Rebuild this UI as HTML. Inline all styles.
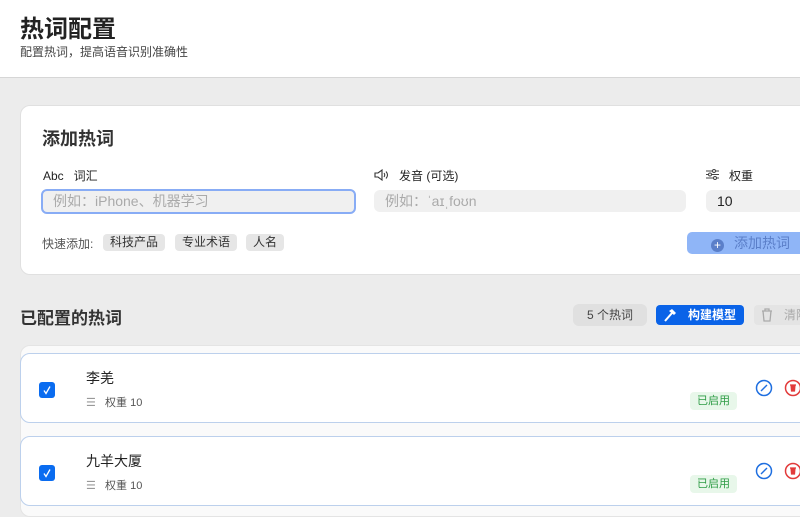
<html><head><style>
body{margin:0;width:800px;height:500px;overflow:hidden;background:#ececec;font-family:"Liberation Sans","Noto Sans CJK SC",sans-serif;color:#222;position:relative}
.a{position:absolute}
.hdr{left:0;top:0;width:800px;height:77px;background:#fff;border-bottom:1px solid #d6d6d6}
.card{left:20px;top:105px;width:800px;height:170px;background:#fff;border-radius:10px;border:1px solid #e0e0e0;box-sizing:border-box}
.inp{background:#f0f0f0;border-radius:6px;height:22px;font-size:14px;color:#aaa;line-height:22px;padding-left:11px;box-sizing:border-box}
.chip{background:#e6e6e6;border-radius:4px;font-size:12px;height:17px;line-height:17px;padding:0 7px;top:234px;color:#333}
.list{left:20px;top:345px;width:800px;height:170px;background:#fafafa;border-radius:10px;border:1px solid #e4e4e4}
.item{left:20px;width:800px;height:70px;background:#fff;border:1.5px solid #bcd0ec;border-radius:10px;box-sizing:border-box}
.cb{width:16px;height:16px;background:#0a6cf0;border-radius:3px}
.tag{background:#e8f7ea;color:#2e9c45;font-size:11px;border-radius:4px;padding:0 7px;height:18px;line-height:18px}
</style></head><body>
<div class="a hdr"></div>
<div class="a" style="left:20px;top:9px;font-size:24px;font-weight:bold;color:#222">热词配置</div>
<div class="a" style="left:20px;top:43px;font-size:12px;color:#444">配置热词，提高语音识别准确性</div>
<div class="a card"></div>
<div class="a" style="left:42px;top:125px;font-size:18px;font-weight:bold;color:#333">添加热词</div>
<div class="a" style="left:43px;top:167px;font-size:12px;color:#222">Abc&nbsp;&nbsp;&nbsp;词汇</div>
<div class="a inp" style="left:41px;top:189px;width:315px;height:25px;border:2.5px solid #88acf5;line-height:20px;padding-left:10px">例如：iPhone、机器学习</div>
<svg class="a" style="left:374px;top:169px" width="16" height="12" viewBox="0 0 16 12"><path d="M1 4h3l4-3v10l-4-3H1z" fill="none" stroke="#333" stroke-width="1.1"/><path d="M10 4q1.5 2 0 4M12 2.5q3 3.5 0 7" fill="none" stroke="#333" stroke-width="1"/></svg>
<div class="a" style="left:399px;top:167px;font-size:12px;color:#222">发音 (可选)</div>
<div class="a inp" style="left:374px;top:190px;width:312px">例如：ˈaɪˌfoʊn</div>
<svg class="a" style="left:706px;top:169px" width="13" height="11" viewBox="0 0 13 11"><path d="M0 2h13M0 5.5h13M0 9h13" stroke="#444" stroke-width="1"/><circle cx="8" cy="2" r="1.5" fill="#fff" stroke="#444"/><circle cx="4" cy="5.5" r="1.5" fill="#fff" stroke="#444"/><circle cx="9" cy="9" r="1.5" fill="#fff" stroke="#444"/></svg>
<div class="a" style="left:729px;top:167px;font-size:12px;color:#222">权重</div>
<div class="a inp" style="left:706px;top:190px;width:100px;color:#222">10</div>
<div class="a" style="left:42px;top:235px;font-size:12px;color:#555">快速添加:</div>
<div class="a chip" style="left:103px">科技产品</div>
<div class="a chip" style="left:175px">专业术语</div>
<div class="a chip" style="left:246px">人名</div>
<div class="a" style="left:687px;top:232px;width:120px;height:22px;background:#8fb5f7;border-radius:5px;color:#5b7fc9;font-size:14px;line-height:22px;padding-left:24px;box-sizing:border-box"><span style="display:inline-block;width:13px;height:13px;border-radius:50%;background:#5b7fc9;color:#fff;font-size:12px;line-height:13px;text-align:center;margin-right:10px;vertical-align:-1px">+</span>添加热词</div>
<div class="a" style="left:20px;top:304px;font-size:17px;font-weight:bold;color:#333">已配置的热词</div>
<div class="a" style="left:573px;top:304px;width:74px;height:22px;background:#e0e0e0;border-radius:6px;font-size:12px;line-height:22px;text-align:center;color:#444">5 个热词</div>
<div class="a" style="left:656px;top:305px;width:88px;height:20px;background:#0a63e8;border-radius:4px;font-size:12px;font-weight:bold;line-height:20px;color:#fff;padding-left:32px;box-sizing:border-box">构建模型</div>
<svg class="a" style="left:663px;top:308px" width="14" height="14" viewBox="0 0 14 14"><path d="M2 13L9 5" stroke="#fff" stroke-width="2"/><path d="M6 3l3-2 4 4-2 2z" fill="#fff"/></svg>
<div class="a" style="left:754px;top:305px;width:60px;height:20px;background:#e4e4e4;border-radius:4px;font-size:12px;line-height:20px;color:#aaa;padding-left:30px;box-sizing:border-box">清除</div>
<svg class="a" style="left:761px;top:308px" width="12" height="14" viewBox="0 0 12 14"><path d="M1 3h10M4 3V1h4v2M2 3l1 10h6l1-10" fill="none" stroke="#aaa" stroke-width="1.3"/></svg>
<div class="a list"></div>
<div class="a item" style="top:353px"></div>
<div class="a cb" style="left:39px;top:382px"></div>
<svg class="a" style="left:39px;top:382px" width="16" height="16"><path d="M5 8.5l2 3 4-7" fill="none" stroke="#fff" stroke-width="1.3"/></svg>
<div class="a" style="left:86px;top:368px;font-size:14px">李羌</div>
<div class="a" style="left:86px;top:394px;font-size:11px;color:#555"><span style="color:#999">☰</span>&nbsp;&nbsp;&nbsp;权重 10</div>
<div class="a tag" style="left:690px;top:392px">已启用</div>
<svg class="a" style="left:755px;top:379px" width="18" height="18"><circle cx="9" cy="9" r="7.5" fill="none" stroke="#1f6fe0" stroke-width="1.5"/><path d="M6 12l6-6" stroke="#1f6fe0" stroke-width="1.4"/></svg>
<svg class="a" style="left:784px;top:379px" width="18" height="18"><circle cx="9" cy="9" r="7.5" fill="none" stroke="#e23b3b" stroke-width="1.5"/><path d="M6 6h6M7 6l.5 6h3l.5-6" fill="#e23b3b" stroke="#e23b3b" stroke-width="1.2"/></svg>
<div class="a item" style="top:436px"></div>
<div class="a cb" style="left:39px;top:465px"></div>
<svg class="a" style="left:39px;top:465px" width="16" height="16"><path d="M5 8.5l2 3 4-7" fill="none" stroke="#fff" stroke-width="1.3"/></svg>
<div class="a" style="left:86px;top:451px;font-size:14px">九羊大厦</div>
<div class="a" style="left:86px;top:477px;font-size:11px;color:#555"><span style="color:#999">☰</span>&nbsp;&nbsp;&nbsp;权重 10</div>
<div class="a tag" style="left:690px;top:475px">已启用</div>
<svg class="a" style="left:755px;top:462px" width="18" height="18"><circle cx="9" cy="9" r="7.5" fill="none" stroke="#1f6fe0" stroke-width="1.5"/><path d="M6 12l6-6" stroke="#1f6fe0" stroke-width="1.4"/></svg>
<svg class="a" style="left:784px;top:462px" width="18" height="18"><circle cx="9" cy="9" r="7.5" fill="none" stroke="#e23b3b" stroke-width="1.5"/><path d="M6 6h6M7 6l.5 6h3l.5-6" fill="#e23b3b" stroke="#e23b3b" stroke-width="1.2"/></svg>
</body></html>
